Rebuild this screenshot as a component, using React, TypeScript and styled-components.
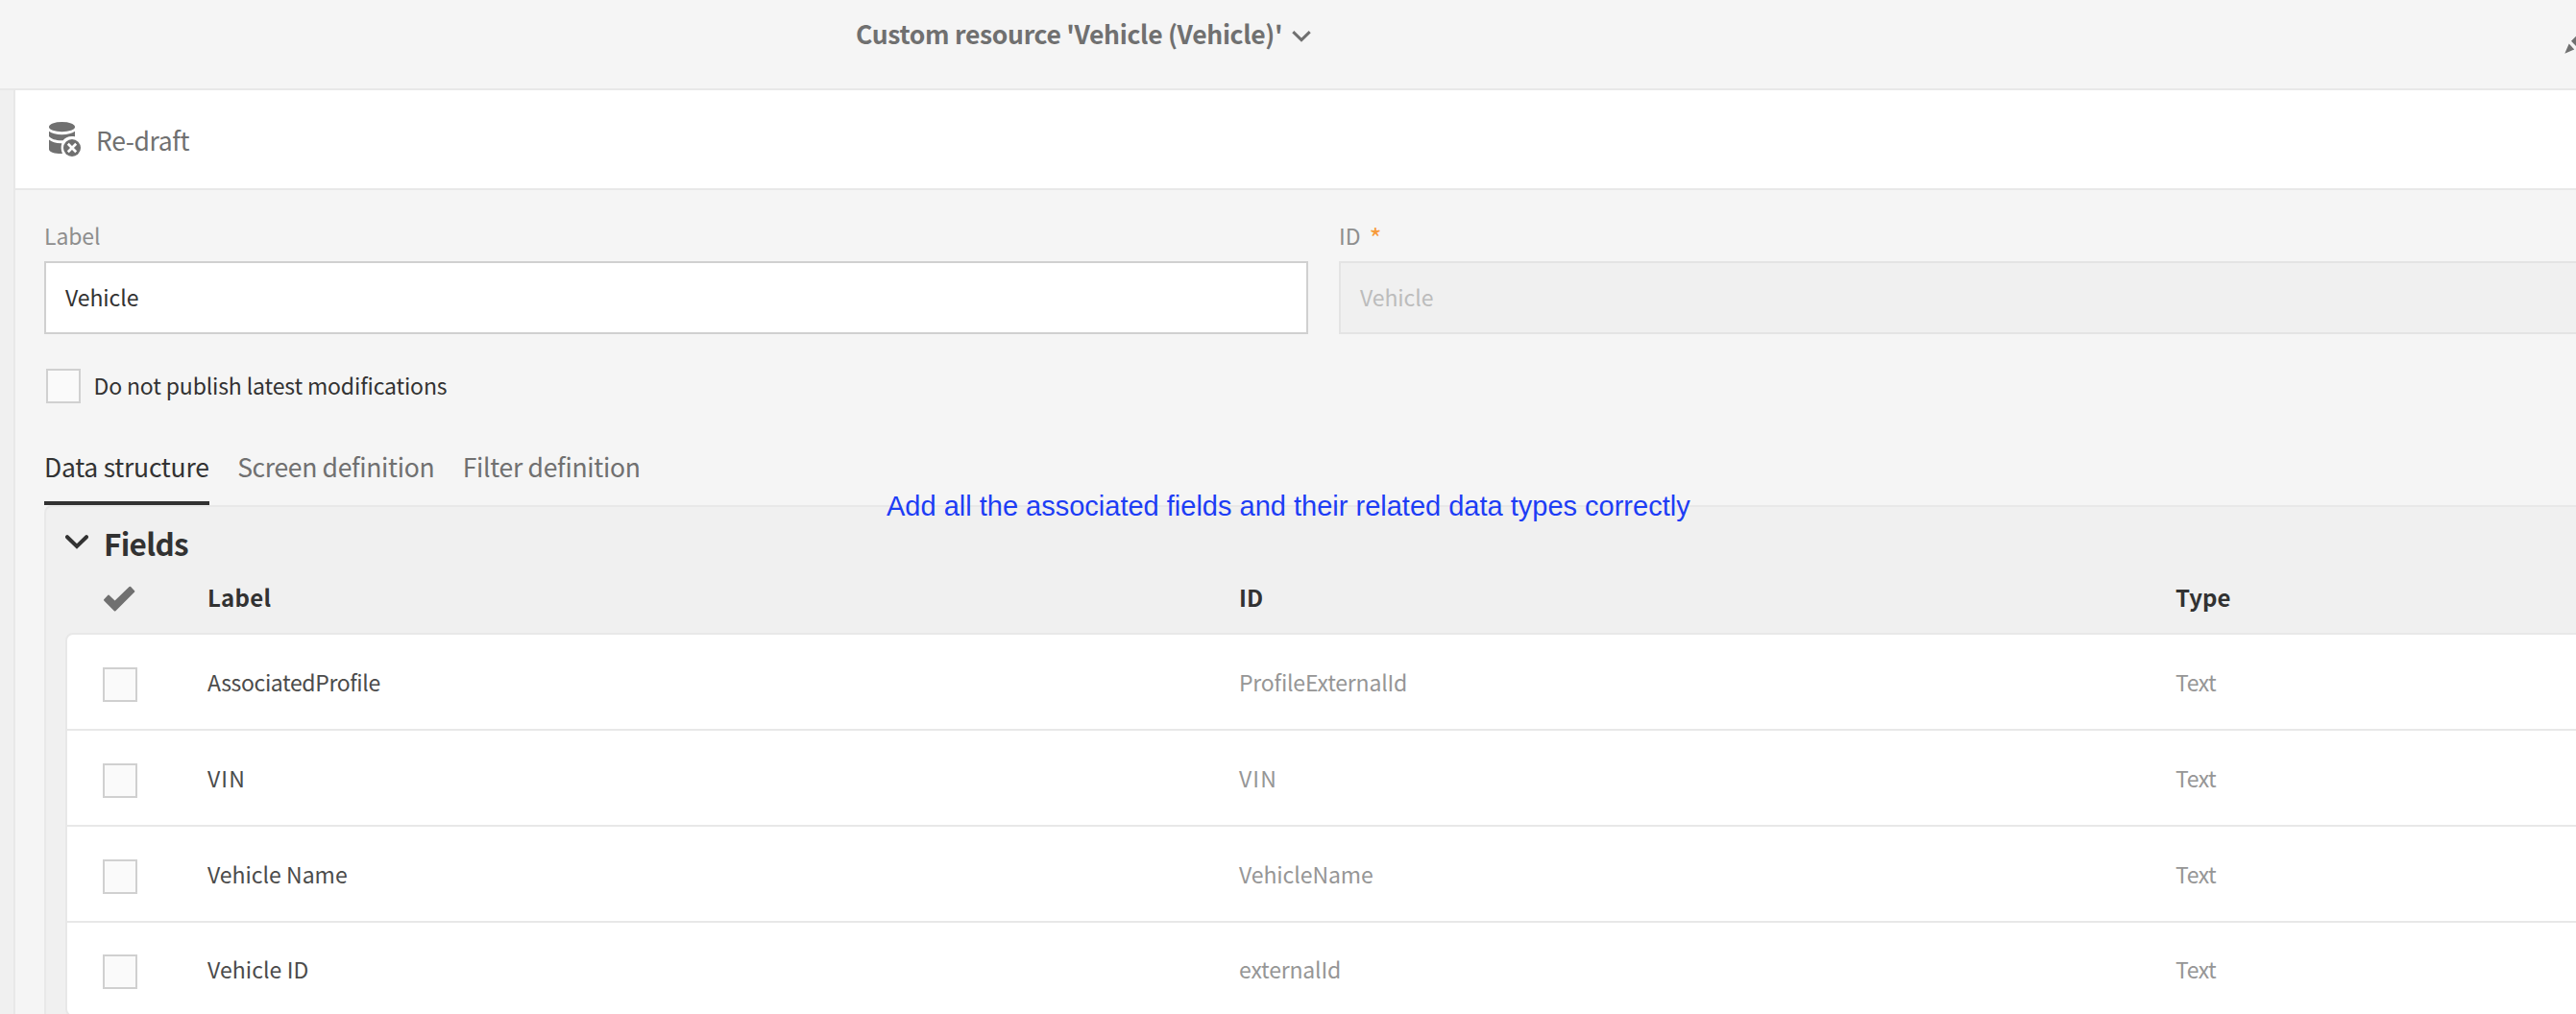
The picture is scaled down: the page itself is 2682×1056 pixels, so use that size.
import React from "react";
import styled, { createGlobalStyle } from "styled-components";

const GlobalStyle = createGlobalStyle`
  *, *::before, *::after { box-sizing: border-box; }
  body {
    margin: 0;
    background: #f5f5f5;
    font-family: "Noto Sans CJK SC", "Noto Sans", sans-serif;
    font-size: 23px;
    color: #323232;
    overflow: hidden;
  }
`;

const Page = styled.div`
  position: relative;
  display: flex;
  flex-direction: column;
  width: 100%;
  height: 1056px;
  overflow: hidden;
`;

const TopBar = styled.header`
  flex: none;
  display: flex;
  justify-content: space-between;
  height: 94px;
  padding-left: 891px;
  border-bottom: 2px solid #e8e8e8;
  color: #707070;
`;

const Title = styled.h1`
  display: flex;
  gap: 10px;
  margin: 0;
  padding-top: 15px;
  font-size: 26.5px;
  font-weight: 700;
  line-height: 40px;
  letter-spacing: -0.32px;
  white-space: nowrap;

  svg { margin-top: 16px; }
`;

const EditButton = styled.div`
  flex: none;
  width: 12px;
  padding-top: 20px;
  overflow: hidden;
`;

const Workspace = styled.div`
  flex: 1;
  display: flex;
  min-height: 0;
`;

const Rail = styled.aside`
  flex: none;
  width: 16px;
  background: #f0f0f0;
  border-right: 2px solid #e8e8e8;
`;

const Main = styled.main`
  flex: 1;
  min-width: 0;
  overflow: hidden;
`;

const Toolbar = styled.div`
  display: flex;
  gap: 15px;
  height: 104px;
  padding: 33px 0 0 35px;
  background: #fff;
  border-bottom: 2px solid #e8e8e8;
  color: #707070;
`;

const ToolbarText = styled.span`
  margin-top: -1px;
  font-size: 26.5px;
  line-height: 40px;
  letter-spacing: -0.39px;
`;

const Form = styled.div`
  width: 2694px;
  padding: 30px 0 0 30px;
`;

const FieldRow = styled.div`
  display: grid;
  grid-template-columns: 1316px 1316px;
  column-gap: 32px;
`;

const FieldLabel = styled.div`
  display: flex;
  height: 44px;
  line-height: 34px;
  color: #8e8e8e;
  letter-spacing: -0.1px;
`;

const Required = styled.span`
  margin: 2px 0 0 9px;
  color: #f79a3a;
  font-size: 28px;
`;

const Input = styled.div<{ $disabled?: boolean }>`
  height: 76px;
  padding-left: 20px;
  border: 2px solid ${(p) => (p.$disabled ? "#e4e4e4" : "#d0d0d0")};
  background: ${(p) => (p.$disabled ? "#f0f0f0" : "#fff")};
  color: ${(p) => (p.$disabled ? "#bcbcbc" : "#323232")};
  line-height: 70px;
  letter-spacing: -0.07px;
`;

const CheckRow = styled.div`
  display: flex;
  gap: 13.5px;
  margin-top: 36px;
  padding-left: 2px;
  line-height: 35px;
  letter-spacing: -0.15px;
`;

const Checkbox = styled.span`
  flex: none;
  width: 36px;
  height: 36px;
  border: 2px solid #d0d0d0;
  background: #fafafa;
`;

const Tabs = styled.nav`
  display: flex;
  gap: 29.5px;
  height: 62px;
  margin-top: 44px;
`;

const Tab = styled.div<{ $active?: boolean; $spacing: number }>`
  height: 62px;
  border-bottom: 4px solid ${(p) => (p.$active ? "#323232" : "transparent")};
  color: ${(p) => (p.$active ? "#323232" : "#707070")};
  font-size: 26.5px;
  line-height: 44px;
  letter-spacing: ${(p) => p.$spacing}px;
  white-space: nowrap;
`;

const Panel = styled.section`
  height: 560px;
  padding-left: 20px;
  border: 2px solid #e8e8e8;
  border-radius: 8px 0 0 0;
  background: #f0f0f0;
`;

const SectionTitle = styled.h2`
  display: flex;
  gap: 16px;
  height: 68px;
  margin: 0;
  padding-top: 12px;
  font-size: 31.5px;
  font-weight: 700;
  line-height: 50px;
  letter-spacing: -0.7px;

  svg { margin-top: 17px; }
`;

const Columns = styled.div`
  display: grid;
  grid-template-columns: 109px 1074px 975px 1fr;
`;

const HeadRow = styled(Columns)`
  height: 63px;
  padding-left: 39px;
  font-size: 24px;
  font-weight: 700;
  line-height: 52px;

  svg { margin-top: 14px; }
`;

const HeadCell = styled.span<{ $spacing: number }>`
  letter-spacing: ${(p) => p.$spacing}px;
`;

const Table = styled.div`
  border: 2px solid #e8e8e8;
  border-radius: 8px;
  background: #fff;
`;

const DataRow = styled(Columns)`
  align-items: center;
  height: 100px;
  padding-left: 37px;
  border-bottom: 2px solid #e8e8e8;

  &:last-child {
    height: 96px;
    border-bottom: none;
  }

  ${Checkbox} { margin-top: 6px; }
`;

const Cell = styled.span<{ $muted?: boolean; $spacing?: number }>`
  color: ${(p) => (p.$muted ? "#969696" : "#4b4b4b")};
  letter-spacing: ${(p) => p.$spacing ?? 0}px;
`;

const Annotation = styled.div`
  position: absolute;
  left: 923px;
  top: 510px;
  color: #1d3df5;
  font-family: "Liberation Sans", Arial, sans-serif;
  font-size: 29px;
  line-height: 34px;
  white-space: nowrap;
`;

const ChevronSmall = () => (
  <svg width="20" height="13" viewBox="0 0 20 13" fill="none" stroke="currentColor" strokeWidth="3">
    <path d="M1.3 2.2 10 10.6 18.7 2.2" />
  </svg>
);

const ChevronLarge = () => (
  <svg width="24" height="15" viewBox="0 0 24 15" fill="none" stroke="currentColor" strokeWidth="4" strokeLinecap="round">
    <path d="M2 2.2 12 12 22 2.2" strokeLinejoin="miter" />
  </svg>
);

const CheckMark = () => (
  <svg width="34" height="27" viewBox="0 0 34 27" fill="#707070">
    <path d="M1.2 14.2 5.4 9.7Q6 9.2 6.6 9.7L12.6 15.6 27.6 1Q28.4.4 29.1 1L33.1 5.2Q33.6 5.9 33.1 6.5L13.4 26.2Q12.6 26.8 11.9 26.2L1.2 15.4Q.7 14.8 1.2 14.2Z" />
  </svg>
);

const DatabaseRemove = () => (
  <svg width="34" height="37" viewBox="0 0 34 37" fill="#707070">
    <ellipse cx="13.5" cy="5.2" rx="13.5" ry="5.1" />
    <path d="M0 9.8C3 12 8 13.2 13.5 13.2S24 12 27 9.8V15.2C21 14.2 17 16 14.6 19.2 8 19.6 2.5 18 0 15Z" />
    <path d="M0 18.6C2.8 21 8 22.5 13.4 22.3 12.2 25.5 12.4 29.5 14 32.9 8 33.2 0 31.8 0 28.4Z" />
    <circle cx="24" cy="27" r="9" />
    <path d="M19.8 22.8 28.2 31.2M28.2 22.8 19.8 31.2" stroke="#fff" strokeWidth="2.7" />
  </svg>
);

const Pencil = () => (
  <svg width="36" height="36" viewBox="0 0 36 36" fill="#707070">
    <path d="M.3 35.7 4.7 25.5 10.2 31.4Z" />
    <path d="M7 22.8 25 4.8 31 10.8 12.7 28.7Z" />
  </svg>
);

const rows = [
  { label: "AssociatedProfile", ls: -0.38, id: "ProfileExternalId", is: -0.19 },
  { label: "VIN", ls: 1.1, id: "VIN", is: 1.1 },
  { label: "Vehicle Name", ls: 0, id: "VehicleName", is: -0.07 },
  { label: "Vehicle ID", ls: 0.08, id: "externalId", is: -0.18 },
];

export default function App() {
  return (
    <Page>
      <GlobalStyle />
      <TopBar>
        <Title>
          Custom resource 'Vehicle (Vehicle)'
          <ChevronSmall />
        </Title>
        <EditButton>
          <Pencil />
        </EditButton>
      </TopBar>
      <Workspace>
        <Rail />
        <Main>
          <Toolbar>
            <DatabaseRemove />
            <ToolbarText>Re-draft</ToolbarText>
          </Toolbar>
          <Form>
            <FieldRow>
              <div>
                <FieldLabel>Label</FieldLabel>
                <Input>Vehicle</Input>
              </div>
              <div>
                <FieldLabel>
                  ID<Required>*</Required>
                </FieldLabel>
                <Input $disabled>Vehicle</Input>
              </div>
            </FieldRow>
            <CheckRow>
              <Checkbox />
              <span>Do not publish latest modifications</span>
            </CheckRow>
            <Tabs>
              <Tab $active $spacing={-0.25}>Data structure</Tab>
              <Tab $spacing={-0.33}>Screen definition</Tab>
              <Tab $spacing={-0.3}>Filter definition</Tab>
            </Tabs>
            <Panel>
              <SectionTitle>
                <ChevronLarge />
                Fields
              </SectionTitle>
              <HeadRow>
                <CheckMark />
                <HeadCell $spacing={0.25}>Label</HeadCell>
                <HeadCell $spacing={0.2}>ID</HeadCell>
                <HeadCell $spacing={0}>Type</HeadCell>
              </HeadRow>
              <Table>
                {rows.map((r) => (
                  <DataRow key={r.label}>
                    <Checkbox />
                    <Cell $spacing={r.ls}>{r.label}</Cell>
                    <Cell $muted $spacing={r.is}>{r.id}</Cell>
                    <Cell $muted $spacing={-0.45}>Text</Cell>
                  </DataRow>
                ))}
              </Table>
            </Panel>
          </Form>
        </Main>
      </Workspace>
      <Annotation>Add all the associated fields and their related data types correctly</Annotation>
    </Page>
  );
}
